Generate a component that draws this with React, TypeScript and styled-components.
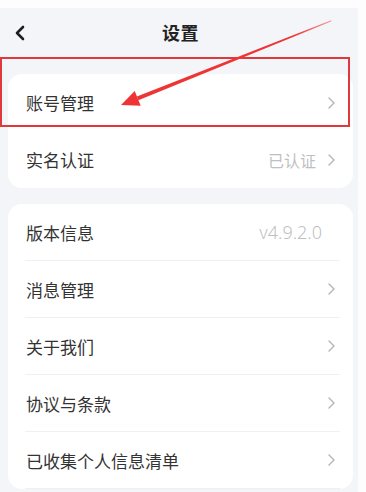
import React from "react";
import styled, { createGlobalStyle } from "styled-components";

const GlobalStyle = createGlobalStyle`
  html, body {
    margin: 0;
    padding: 0;
    background: #fdfdfe;
  }
  body {
    font-family: "Noto Sans CJK SC", "Noto Sans", sans-serif;
  }
`;

const Screen = styled.div`
  position: relative;
  width: 366px;
  height: 492px;
  overflow: hidden;
  padding-top: 8px;
  box-sizing: border-box;
`;

const Page = styled.div`
  width: 358px;
  min-height: 484px;
  background: #f4f5f9;
  padding: 0 5px 0 8px;
  box-sizing: border-box;
`;

const Header = styled.div`
  height: 50px;
  display: flex;
  align-items: center;
  justify-content: center;
  position: relative;
`;

const Back = styled.div`
  position: absolute;
  left: 6px;
  top: 17px;
  display: flex;
`;

const Title = styled.div`
  font-size: 18px;
  font-weight: 700;
  color: #222;
  letter-spacing: 0.5px;
  margin-top: -3px;
`;

const Card = styled.div<{ $top: number }>`
  margin-top: ${({ $top }) => $top}px;
  background: #ffffff;
  border-radius: 14px;
  overflow: hidden;
`;

const Row = styled.div<{ $divider?: boolean }>`
  height: 57px;
  margin: 0 13px 0 17px;
  display: flex;
  align-items: center;
  box-sizing: border-box;
  border-bottom: ${({ $divider }) => ($divider ? "1px solid #f0f0f2" : "none")};
`;

const Label = styled.span`
  flex: 1;
  padding-left: 1px;
  font-size: 17px;
  color: #333;
`;

const Value = styled.span`
  font-size: 16px;
  color: #bfbfc3;
`;

const Version = styled(Value)`
  font-family: "Noto Sans", sans-serif;
  font-weight: 300;
  font-size: 18px;
  margin-right: 18px;
`;

const ChevronBox = styled.span`
  display: flex;
  margin-left: 12px;
  margin-right: 5px;
`;

const Highlight = styled.div`
  position: absolute;
  left: 0;
  top: 57px;
  width: 350px;
  height: 70px;
  border: 2px solid #e0393c;
  box-sizing: border-box;
  pointer-events: none;
`;

const ArrowLayer = styled.svg`
  position: absolute;
  left: 0;
  top: 0;
  pointer-events: none;
`;

const Chevron = () => (
  <ChevronBox>
    <svg width="7" height="12" viewBox="0 0 7 12">
      <polyline points="1,1 6,6 1,11" fill="none" stroke="#b4b4b8" strokeWidth="1.4" strokeLinecap="round" strokeLinejoin="round" />
    </svg>
  </ChevronBox>
);

const firstCard = [
  { label: "账号管理" },
  { label: "实名认证", value: "已认证" },
];

const secondCard = ["消息管理", "关于我们", "协议与条款", "已收集个人信息清单"];

export default function App() {
  return (
    <>
      <GlobalStyle />
      <Screen>
        <Page>
          <Header>
            <Back>
              <svg width="12" height="16" viewBox="0 0 12 16">
                <polyline points="9,2 3,8 9,14" fill="none" stroke="#1e1e1e" strokeWidth="2.6" strokeLinecap="round" strokeLinejoin="round" />
              </svg>
            </Back>
            <Title>设置</Title>
          </Header>

          <Card $top={16}>
            {firstCard.map((item) => (
              <Row key={item.label}>
                <Label>{item.label}</Label>
                {item.value && <Value>{item.value}</Value>}
                <Chevron />
              </Row>
            ))}
          </Card>

          <Card $top={16}>
            <Row $divider>
              <Label>版本信息</Label>
              <Version>v4.9.2.0</Version>
            </Row>
            {secondCard.map((label) => (
              <Row key={label} $divider>
                <Label>{label}</Label>
                <Chevron />
              </Row>
            ))}
          </Card>
        </Page>

        <Highlight />
        <ArrowLayer width="366" height="492" viewBox="0 0 366 492">
          <defs>
            <linearGradient id="shaft" x1="137" y1="98" x2="333" y2="20" gradientUnits="userSpaceOnUse">
              <stop offset="0" stopColor="#ee3434" />
              <stop offset="0.8" stopColor="#ee3434" />
              <stop offset="1" stopColor="#f3a0a0" />
            </linearGradient>
          </defs>
          <polygon points="138.4,100.2 136.9,96.4 331.2,20.3 331.6,21.3" fill="url(#shaft)" />
          <polygon points="121,105 134.7,90.9 140.7,105.7" fill="#ee3434" />
        </ArrowLayer>
      </Screen>
    </>
  );
}
